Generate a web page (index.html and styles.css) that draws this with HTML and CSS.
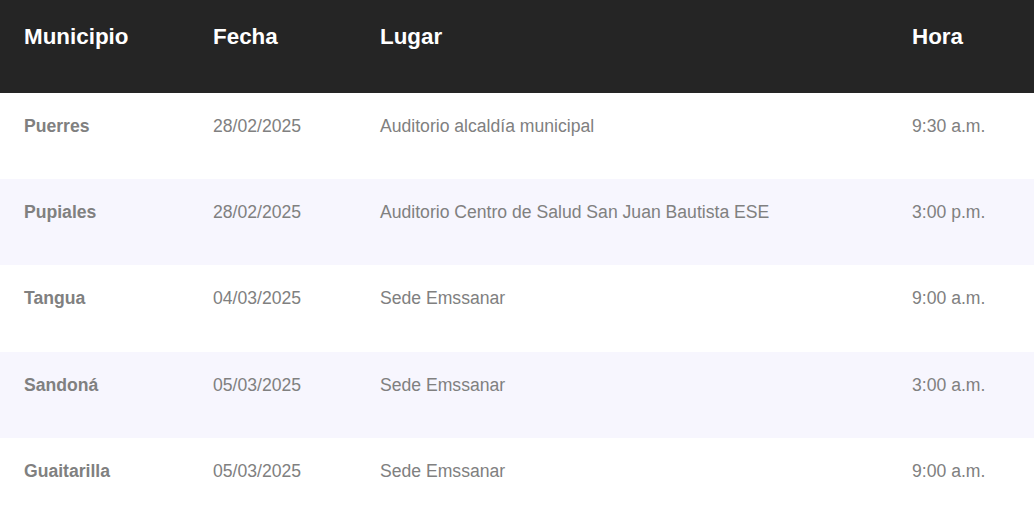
FILE: index.html
```html
<!DOCTYPE html>
<html>
<head>
    <meta charset="UTF-8">
    <title>Agenda de socializaciones</title>
    <link rel="stylesheet" href="styles.css">
</head>
<body>
    <!-- Tabla de agenda por municipio -->
    <div class="schedule">
        <div class="row head">
            <div class="cell">Municipio</div>
            <div class="cell">Fecha</div>
            <div class="cell">Lugar</div>
            <div class="cell">Hora</div>
        </div>
        <div class="row">
            <div class="cell town">Puerres</div>
            <div class="cell">28/02/2025</div>
            <div class="cell">Auditorio alcaldía municipal</div>
            <div class="cell">9:30 a.m.</div>
        </div>
        <div class="row alt">
            <div class="cell town">Pupiales</div>
            <div class="cell">28/02/2025</div>
            <div class="cell">Auditorio Centro de Salud San Juan Bautista ESE</div>
            <div class="cell">3:00 p.m.</div>
        </div>
        <div class="row">
            <div class="cell town">Tangua</div>
            <div class="cell">04/03/2025</div>
            <div class="cell">Sede Emssanar</div>
            <div class="cell">9:00 a.m.</div>
        </div>
        <div class="row alt">
            <div class="cell town">Sandoná</div>
            <div class="cell">05/03/2025</div>
            <div class="cell">Sede Emssanar</div>
            <div class="cell">3:00 a.m.</div>
        </div>
        <div class="row">
            <div class="cell town">Guaitarilla</div>
            <div class="cell">05/03/2025</div>
            <div class="cell">Sede Emssanar</div>
            <div class="cell">9:00 a.m.</div>
        </div>
    </div>
</body>
</html>
```

FILE: styles.css
```css
body {
    margin: 0;
    font-family: "Liberation Sans", Arial, sans-serif;
    background-color: #fff;
}

.schedule {
    width: 100%;
}

/* Each row is a four column grid */
.row {
    display: grid;
    grid-template-columns: 189px 167px 532px 1fr;
    height: 86.2px;
    font-size: 1.1rem;
    color: #808080;
}

    .row.alt {
        background-color: #f7f6fe;
    }

    .row.head {
        height: 93px;
        background-color: #252525;
        color: #fff;
        font-size: 1.4rem;
        font-weight: bold;
    }

.cell {
    padding: 23px 0 0 24px;
}

.row.head .cell {
    padding-top: 24px;
}

.town {
    font-weight: bold;
}
```
